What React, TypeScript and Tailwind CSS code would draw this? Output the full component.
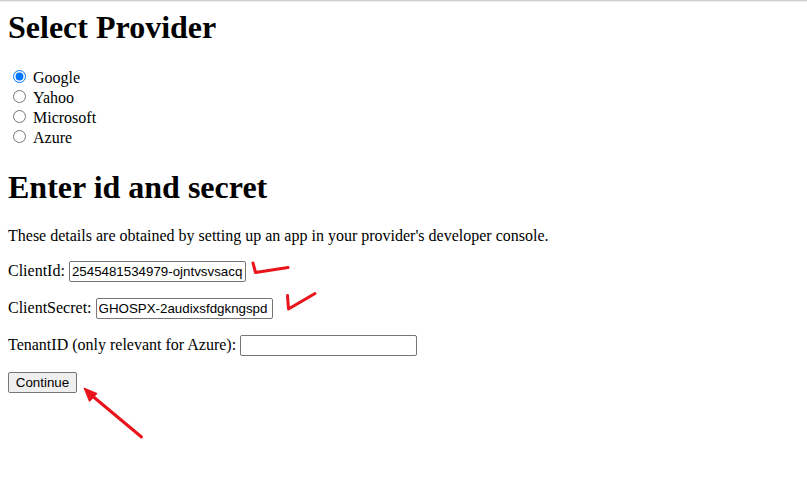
import React from "react";

const providers = ["Google", "Yahoo", "Microsoft", "Azure"];

export default function App() {
  return (
    <div className="relative w-[807px] h-[478px] bg-white text-black font-['Liberation_Serif',serif] text-[16px] leading-[normal] overflow-hidden">
      <div className="h-[1px] bg-[#cfcfcf]" />
      <div className="h-[1px] bg-[#ececec]" />
      <div className="pl-[8px] pt-[7px]">
        <h1 className="text-[32px] font-bold leading-[37px]">Select Provider</h1>
        <div className="mt-[22.44px]">
          {providers.map((p, i) => (
            <label key={p} className="flex items-start h-[20px]">
              <input
                type="radio"
                name="provider"
                defaultChecked={i === 0}
                className="w-[13px] h-[13px] m-0 ml-[5px] mt-[2px] mr-[7px] accent-[#0075ff]"
              />
              <span className="leading-[20px]">{p}</span>
            </label>
          ))}
        </div>
        <h1 className="mt-[20.44px] text-[32px] font-bold leading-[37px]">Enter id and secret</h1>
        <p className="mt-[21.44px]">These details are obtained by setting up an app in your provider's developer console.</p>
        <p className="mt-[16px]">
          ClientId:{" "}
          <input
            type="text"
            readOnly
            value="2545481534979-ojntvsvsacq5m2fh8e.apps.googleusercontent.com"
            className="inline-block align-baseline w-[177px] h-[21px] px-[2px] py-[1px] border border-[#767676] rounded-[2px] bg-white font-['Liberation_Sans',Arial,sans-serif] text-[13.333px] leading-[normal] text-black outline-none"
          />
        </p>
        <p className="mt-[16px]">
          ClientSecret:{" "}
          <input
            type="text"
            readOnly
            value="GHOSPX-2audixsfdgkngspd"
            className="inline-block align-baseline w-[177px] h-[21px] px-[2px] py-[1px] border border-[#767676] rounded-[2px] bg-white font-['Liberation_Sans',Arial,sans-serif] text-[13.333px] leading-[normal] text-black outline-none"
          />
        </p>
        <p className="mt-[16px]">
          TenantID (only relevant for Azure):{" "}
          <input
            type="text"
            readOnly
            value=""
            className="inline-block align-baseline w-[177px] h-[21px] px-[2px] py-[1px] border border-[#767676] rounded-[2px] bg-white font-['Liberation_Sans',Arial,sans-serif] text-[13.333px] leading-[normal] text-black outline-none"
          />
        </p>
        <div className="mt-[16px]">
          <button className="w-[69px] h-[21px] border border-[#767676] rounded-[2px] bg-[#efefef] font-['Liberation_Sans',Arial,sans-serif] text-[13.333px] leading-[normal] text-black">
            Continue
          </button>
        </div>
      </div>
      <svg className="absolute left-0 top-0 pointer-events-none" width="807" height="478" viewBox="0 0 807 478">
        <polyline points="253,263 255.5,272.5 288,267.5" fill="none" stroke="#e8131b" strokeWidth="3" strokeLinecap="round" strokeLinejoin="round" />
        <polyline points="287.5,295.5 288.5,309 315,293.5" fill="none" stroke="#e8131b" strokeWidth="3" strokeLinecap="round" strokeLinejoin="round" />
        <line x1="141.5" y1="437" x2="90" y2="394" stroke="#e8131b" strokeWidth="3" strokeLinecap="round" />
        <polygon points="84,388 97,393.5 89.5,401.5" fill="#e8131b" stroke="#e8131b" strokeWidth="1" strokeLinejoin="round" />
      </svg>
    </div>
  );
}
